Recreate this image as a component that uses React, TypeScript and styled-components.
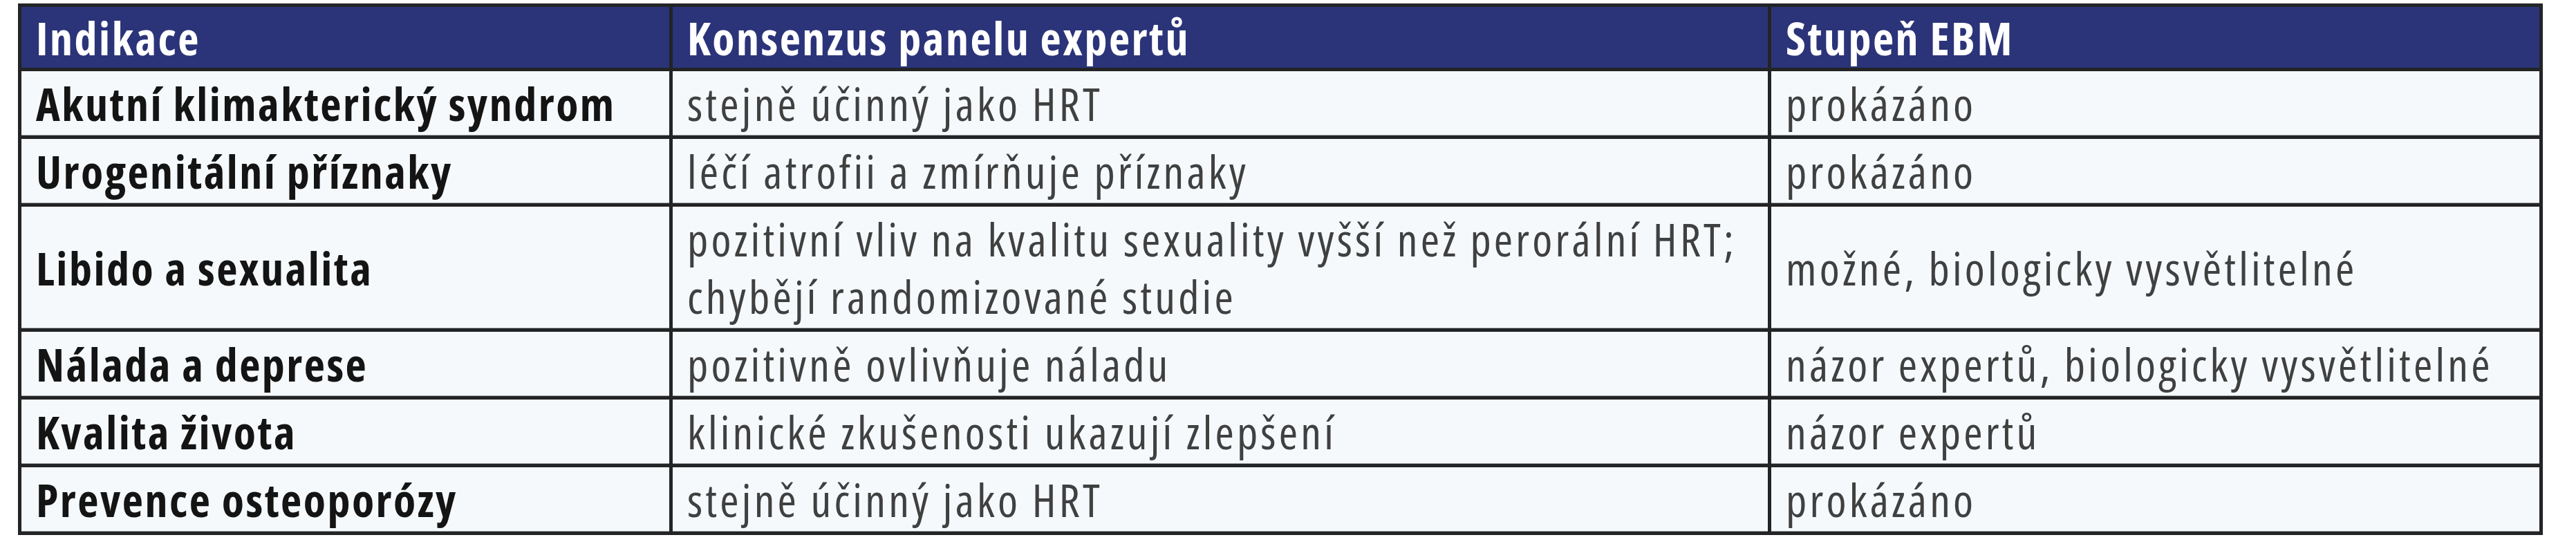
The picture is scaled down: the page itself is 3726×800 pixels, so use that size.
import React from "react";
import styled, { createGlobalStyle } from "styled-components";

const GlobalStyle = createGlobalStyle`
  html, body {
    margin: 0;
    padding: 0;
    background: #ffffff;
  }
  body {
    font-family: "Open Sans", "DejaVu Sans", sans-serif;
    font-stretch: 75%;
  }
`;

const Page = styled.div`
  padding: 5px 0 0 26px;
`;

const Table = styled.div`
  display: grid;
  grid-template-columns: 937px 1584px 1111px;
  gap: 5px;
  padding: 5px;
  width: 3652px;
  box-sizing: border-box;
  background: #232425;
`;

const Cell = styled.div<{ $head?: boolean; $bold?: boolean }>`
  display: flex;
  align-items: center;
  padding: ${(p) => (p.$head ? "3px 20px 2px 21px" : "5px 20px 5px 21px")};
  background: ${(p) => (p.$head ? "#2b3479" : "#f5f9fc")};
  box-shadow: ${(p) => (p.$head ? "none" : "inset 0 -1px 0 #a7a9ab")};
  color: ${(p) => (p.$head ? "#ffffff" : p.$bold ? "#141414" : "#404040")};
  font-size: 66px;
  line-height: 83px;
  font-weight: ${(p) => (p.$head || p.$bold ? 700 : 400)};
  letter-spacing: ${(p) => (p.$head || p.$bold ? "2.5px" : "4.2px")};
  white-space: nowrap;
`;

const Lines = styled.div`
  display: flex;
  flex-direction: column;
`;

type Row = [string, string[], string];

const rows: Row[] = [
  ["Akutní klimakterický syndrom", ["stejně účinný jako HRT"], "prokázáno"],
  ["Urogenitální příznaky", ["léčí atrofii a zmírňuje příznaky"], "prokázáno"],
  [
    "Libido a sexualita",
    ["pozitivní vliv na kvalitu sexuality vyšší než perorální HRT;", "chybějí randomizované studie"],
    "možné, biologicky vysvětlitelné",
  ],
  ["Nálada a deprese", ["pozitivně ovlivňuje náladu"], "názor expertů, biologicky vysvětlitelné"],
  ["Kvalita života", ["klinické zkušenosti ukazují zlepšení"], "názor expertů"],
  ["Prevence osteoporózy", ["stejně účinný jako HRT"], "prokázáno"],
];

export default function App() {
  return (
    <>
      <GlobalStyle />
      <Page>
        <Table>
          <Cell $head>Indikace</Cell>
          <Cell $head>Konsenzus panelu expertů</Cell>
          <Cell $head>Stupeň EBM</Cell>
          {rows.map(([ind, cons, ebm]) => (
            <React.Fragment key={ind}>
              <Cell $bold>{ind}</Cell>
              <Cell>
                <Lines>
                  {cons.map((l) => (
                    <span key={l}>{l}</span>
                  ))}
                </Lines>
              </Cell>
              <Cell>{ebm}</Cell>
            </React.Fragment>
          ))}
        </Table>
      </Page>
    </>
  );
}
